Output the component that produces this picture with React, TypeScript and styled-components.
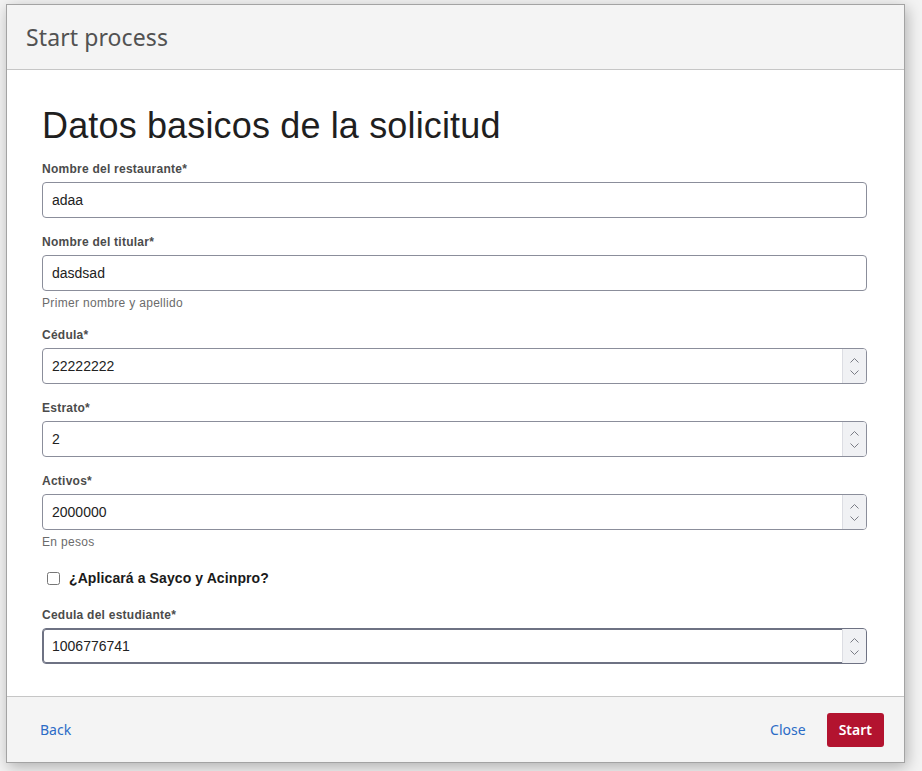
import React from 'react';
import styled, { createGlobalStyle } from 'styled-components';

const GlobalStyle = createGlobalStyle`
  html, body {
    margin: 0;
    padding: 0;
    background: #f3f3f3;
    font-family: "Liberation Sans", Arial, sans-serif;
  }
`;

const Page = styled.div`
  min-height: 771px;
  padding: 4px 0 0 6px;
  box-sizing: border-box;
`;

const Modal = styled.div`
  width: 899px;
  background: #fff;
  border: 1px solid #a3a3a3;
  box-sizing: border-box;
  box-shadow: 2px 4px 14px rgba(0, 0, 0, 0.28);
  display: flex;
  flex-direction: column;
`;

const Header = styled.div`
  height: 64px;
  display: flex;
  align-items: center;
  padding-left: 19px;
  background: #f4f4f4;
  border-bottom: 1px solid #c6c6c6;
`;

const Title = styled.h2`
  margin: 0;
  font-family: "Noto Sans", sans-serif;
  font-weight: 400;
  font-size: 23px;
  letter-spacing: 0.1px;
  color: #525252;
`;

const Body = styled.div`
  padding: 36px 37px 32px 35px;
`;

const Heading = styled.h1`
  margin: 0 0 15px;
  font-family: "Liberation Sans", Arial, sans-serif;
  font-weight: 400;
  font-size: 36px;
  line-height: 40px;
  letter-spacing: 0.15px;
  color: #1f1f1f;
`;

const Field = styled.div<{ $last?: boolean }>`
  margin-bottom: ${(p) => (p.$last ? 0 : 16)}px;
`;

const Label = styled.label`
  display: block;
  font-size: 12px;
  line-height: 16px;
  font-weight: 700;
  letter-spacing: 0.25px;
  color: #4b4b4b;
  margin-bottom: 5px;
`;

const InputBox = styled.div<{ $focused?: boolean }>`
  height: 36px;
  box-sizing: border-box;
  display: flex;
  border: 1px solid ${(p) => (p.$focused ? '#6e7283' : '#8b8e9b')};
  box-shadow: ${(p) => (p.$focused ? 'inset 0 0 0 1px #6e7283' : 'none')};
  border-radius: 4px;
  overflow: hidden;
  background: #fff;
`;

const TextInput = styled.input`
  flex: 1;
  min-width: 0;
  border: none;
  outline: none;
  padding: 0 9px;
  font-family: "Liberation Sans", Arial, sans-serif;
  font-size: 14px;
  color: #222;
  background: transparent;
`;

const Spinner = styled.div`
  width: 23px;
  display: flex;
  flex-direction: column;
  align-items: center;
  justify-content: center;
  gap: 7px;
  background: #f0f1f4;
  border-left: 1px solid #dcdde3;
`;

const Help = styled.div`
  font-size: 12px;
  line-height: 14px;
  letter-spacing: 0.32px;
  color: #6b6b6b;
  margin: -11px 0 17px;
`;

const CheckRow = styled.label`
  display: flex;
  align-items: center;
  height: 20px;
  margin: 19px 0 19px;
  font-size: 14px;
  font-weight: 700;
  letter-spacing: 0.1px;
  color: #1a1a1a;

  input {
    margin: 0 9px 0 5px;
    width: 13px;
    height: 13px;
  }
`;

const Footer = styled.div`
  height: 65px;
  display: flex;
  align-items: center;
  justify-content: space-between;
  padding: 0 20px 0 21px;
  background: #f4f4f4;
  border-top: 1px solid #c6c6c6;
`;

const Actions = styled.div`
  display: flex;
  align-items: center;
  gap: 9px;
`;

const LinkButton = styled.button`
  border: none;
  background: none;
  padding: 8px 12px;
  font-family: "Noto Sans", sans-serif;
  font-size: 14px;
  color: #2b6bc6;
  cursor: pointer;
`;

const PrimaryButton = styled.button`
  height: 34px;
  padding: 0 12px;
  border: none;
  border-radius: 3px;
  background: #b3132f;
  color: #fff;
  font-family: "Noto Sans", sans-serif;
  font-weight: 600;
  font-size: 14px;
  cursor: pointer;
`;

function Chevron({ up }: { up?: boolean }) {
  return (
    <svg width="9" height="5" viewBox="0 0 9 5">
      <path
        d={up ? 'M0.5 4.5 L4.5 0.5 L8.5 4.5' : 'M0.5 0.5 L4.5 4.5 L8.5 0.5'}
        fill="none"
        stroke="#7a7c85"
        strokeWidth="1"
      />
    </svg>
  );
}

interface FieldProps {
  label: string;
  value: string;
  numeric?: boolean;
  focused?: boolean;
  last?: boolean;
  help?: string;
}

function FormField({ label, value, numeric, focused, last, help }: FieldProps) {
  return (
    <>
      <Field $last={last}>
        <Label>{label}</Label>
        <InputBox $focused={focused}>
          <TextInput defaultValue={value} />
          {numeric && (
            <Spinner>
              <Chevron up />
              <Chevron />
            </Spinner>
          )}
        </InputBox>
      </Field>
      {help && <Help>{help}</Help>}
    </>
  );
}

export default function App() {
  return (
    <>
      <GlobalStyle />
      <Page>
        <Modal>
          <Header>
            <Title>Start process</Title>
          </Header>
          <Body>
            <Heading>Datos basicos de la solicitud</Heading>
            <FormField label="Nombre del restaurante*" value="adaa" />
            <FormField label="Nombre del titular*" value="dasdsad" help="Primer nombre y apellido" />
            <FormField label="Cédula*" value="22222222" numeric />
            <FormField label="Estrato*" value="2" numeric />
            <FormField label="Activos*" value="2000000" numeric help="En pesos" />
            <CheckRow>
              <input type="checkbox" />
              ¿Aplicará a Sayco y Acinpro?
            </CheckRow>
            <FormField label="Cedula del estudiante*" value="1006776741" numeric focused last />
          </Body>
          <Footer>
            <LinkButton>Back</LinkButton>
            <Actions>
              <LinkButton>Close</LinkButton>
              <PrimaryButton>Start</PrimaryButton>
            </Actions>
          </Footer>
        </Modal>
      </Page>
    </>
  );
}
